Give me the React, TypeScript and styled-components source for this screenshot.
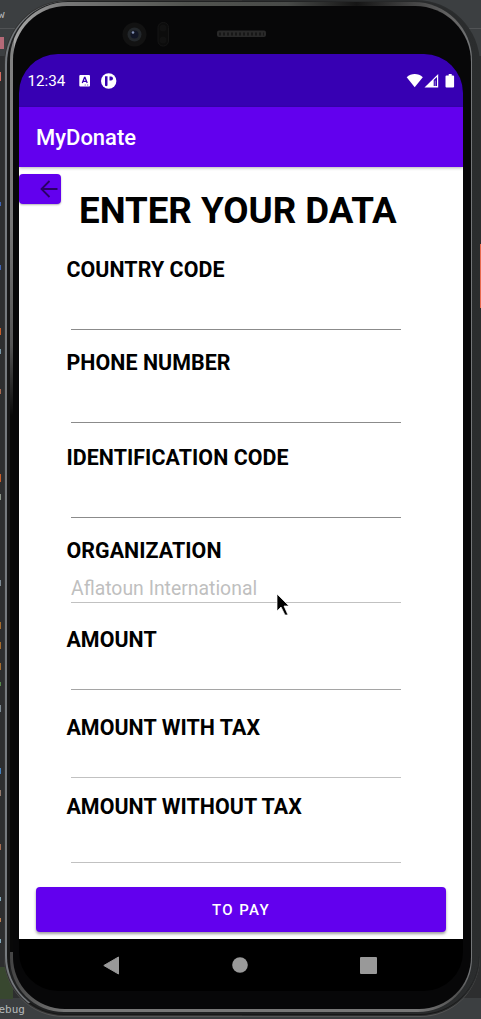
import React from 'react';
import styled, { createGlobalStyle } from 'styled-components';

const Global = createGlobalStyle`
  * { box-sizing: border-box; }
  body { margin: 0; background: #3c3f41; font-family: Roboto, "Liberation Sans", sans-serif; overflow: hidden; }
`;

const Desktop = styled.div`
  position: relative;
  width: 481px;
  height: 1019px;
  padding-left: 4px;
  overflow: hidden;
  background: linear-gradient(#3c3f41 0 28px, #515355 28px 29px, #3c3f41 29px 56px, #2d2e2f 56px 998px, #3c3f41 998px);
`;

const EditorMark = styled.i<{ $top: number; $height: number; $color: string; $side?: 'left' | 'right'; $width?: number }>`
  position: absolute;
  ${(p) => p.$side ?? 'left'}: 0;
  top: ${(p) => p.$top}px;
  width: ${(p) => p.$width ?? 1}px;
  height: ${(p) => p.$height}px;
  background: ${(p) => p.$color};
`;

const EditorText = styled.span<{ $left: number; $top: number }>`
  position: absolute;
  left: ${(p) => p.$left}px;
  top: ${(p) => p.$top}px;
  color: #b4b8ba;
  font: 11px/14px "DejaVu Sans Mono", monospace;
`;

const Shell = styled.div`
  position: relative;
  width: 476px;
  height: 1017px;
  border-radius: 64px 64px 60px 60px;
  padding: 1px;
  background: linear-gradient(90deg, #333333 0 50%, #2b2d2e 50%);
  border-bottom: 1px solid #555;
`;

const OuterEdge = styled.div`
  height: 100%;
  border-radius: 63px 63px 59px 59px;
  border-left: 2px solid #75797d;
  border-bottom: 1px solid #171717;
  padding: 1px 7px 2px 3px;
  background: linear-gradient(90deg, #171717 0 3px, #202122 3px 50%, #2b2d2e);
`;

const InnerEdge = styled.div`
  height: 100%;
  border-radius: 58px 58px 54px 54px;
  padding: 4px 1px 3px 3px;
  background:
    linear-gradient(#858585 0, #777 22%, #555 34%, transparent 41%) left / 4px 100% no-repeat,
    linear-gradient(90deg, transparent 0 94%, #737577 99%) right / 50% 100% no-repeat,
    linear-gradient(90deg, #aaa 0, #777 12%, #525450 38%, #484a48 60%, #151515 75%, #666 96%) top / 100% 70px no-repeat,
    linear-gradient(90deg, #444 0, #777 12%, #777 88%, #444) bottom / 100% 60px no-repeat,
    #080808;
`;

const Face = styled.div`
  height: 100%;
  display: flex;
  flex-direction: column;
  padding: 48px 8px 0 6px;
  border-radius: 54px 56px 52px 52px;
  background: #070708;
`;

const Screen = styled.div`
  width: 444px;
  height: 937px;
  display: flex;
  flex-direction: column;
  overflow: hidden;
  border-radius: 39px;
  background: #000;
`;

const StatusBar = styled.div`
  height: 53px;
  flex: none;
  display: flex;
  align-items: center;
  padding: 0 8px 0 8.5px;
  background: #3700b3;
  color: #fff;
`;

const Clock = styled.span`
  width: 51.5px;
  font-size: 15.2px;
  line-height: 20px;
`;

const StatusLeft = styled.svg` display: block; width: 40px; height: 18px; `;
const StatusRight = styled.svg` display: block; width: 49px; height: 18px; margin-left: auto; `;

const AppBar = styled.header`
  position: relative;
  height: 60px;
  flex: none;
  display: flex;
  align-items: center;
  padding: 1px 17px 0;
  background: #6200ee;
  color: #fff;
  font-size: 22px;
  font-weight: 500;
  box-shadow: 0 1px 3px rgba(0, 0, 0, 0.3);
`;

const Content = styled.main`
  height: 832px;
  flex: none;
  background: #fff;
`;

const TopRow = styled.div`
  display: flex;
  align-items: flex-start;
  height: 90px;
  padding-top: 7px;
`;

const BackButton = styled.button`
  width: 42px;
  height: 30px;
  flex: none;
  padding: 0 0 0 21px;
  border: 0;
  border-radius: 4px;
  background: #6200ee;
  box-shadow: 0 1px 2px rgba(0, 0, 0, 0.3);
  svg { display: block; }
`;

const Title = styled.h1`
  margin: 15px 0 0 18px;
  white-space: nowrap;
  color: #000;
  font-size: 36.7px;
  line-height: 44px;
  font-weight: 700;
`;

const Form = styled.form`
  display: flex;
  flex-direction: column;
  padding-left: 47px;
`;

const Field = styled.div<{ $gap: number }>`
  width: 338px;
  margin-bottom: ${(p) => p.$gap}px;
`;

const Label = styled.div`
  height: 24px;
  padding-left: 0.4px;
  line-height: 25px;
  font-size: 21.4px;
  font-weight: 700;
  letter-spacing: 0.07px;
  white-space: nowrap;
  color: #000;
`;

const Value = styled.div<{ $height: number; $line: string }>`
  height: ${(p) => p.$height}px;
  width: 330px;
  margin-left: 5px;
  padding-top: 15px;
  border-bottom: 1px solid ${(p) => p.$line};
  color: #bfbfbf;
  font-size: 19.4px;
  line-height: 24px;
`;

const PayButton = styled.button`
  display: block;
  width: 410px;
  height: 45px;
  margin-left: 17px;
  padding: 0;
  border: 0;
  border-radius: 4px;
  background: #6200ee;
  color: #fff;
  font: 500 15px/47px Roboto, sans-serif;
  letter-spacing: 1.4px;
  box-shadow: 0 2px 3px rgba(0, 0, 0, 0.38);
`;

const NavBar = styled.nav`
  height: 52px;
  display: flex;
  align-items: center;
  justify-content: space-between;
  padding: 0 86px 0 84px;
  svg { display: block; }
`;

const Hardware = styled.svg`
  position: absolute;
  left: 0;
  top: 0;
  width: 476px;
  height: 54px;
`;

const Pointer = styled.svg`
  position: absolute;
  left: 276px;
  top: 593px;
  width: 14px;
  height: 24px;
`;

const fields = [
  { label: 'COUNTRY CODE', height: 49, gap: 20, line: '#8b8b8b' },
  { label: 'PHONE NUMBER', height: 49, gap: 22, line: '#8b8b8b' },
  { label: 'IDENTIFICATION CODE', height: 49, gap: 20, line: '#8b8b8b' },
  { label: 'ORGANIZATION', height: 41, gap: 24, line: '#c1c1c1', value: 'Aflatoun International' },
  { label: 'AMOUNT', height: 39, gap: 25, line: '#a5a5a5' },
  { label: 'AMOUNT WITH TAX', height: 39, gap: 16, line: '#c1c1c1' },
  { label: 'AMOUNT WITHOUT TAX', height: 45, gap: 24, line: '#c1c1c1' },
];

const marks: [number, number, string][] = [
  [72, 9, '#d66b60'], [202, 4, '#3e63b5'], [265, 5, '#3e63b5'], [328, 7, '#c85c28'],
  [349, 5, '#7798a8'], [389, 5, '#a86850'], [474, 8, '#c85c28'], [494, 6, '#8a9488'],
  [580, 6, '#7c8992'], [622, 7, '#a66b2c'], [642, 7, '#a66b2c'], [663, 7, '#a66b2c'],
  [682, 4, '#538b49'], [705, 7, '#7c8992'], [768, 6, '#4380bd'], [790, 6, '#93786a'],
  [844, 6, '#a66b50'], [897, 4, '#80a7b9'], [918, 4, '#b97c4f'], [939, 4, '#80a7b9'],
];

export default function App() {
  return (
    <Desktop>
      <Global />
      <EditorText $left={-2} $top={8}>w</EditorText>
      <EditorMark $top={37} $height={12} $color="#b66a78" $width={4} />
      {marks.map(([top, height, color]) => (
        <EditorMark key={top} $top={top} $height={height} $color={color} />
      ))}
      <EditorMark $top={967} $height={32} $color="#38472f" $width={13} />
      <EditorText $left={-1.5} $top={1003}>ebug</EditorText>

      <Shell>
        <OuterEdge>
          <InnerEdge>
            <Face>
              <Screen>
                <StatusBar>
                  <Clock>12:34</Clock>
                  <StatusLeft viewBox="0 0 40 18">
                    <rect x="0.300" y="3" width="10.700" height="11.500" rx="1" fill="#fff" />
                    <path d="M3.300 11 5.500 5.500h.500L8.200 11M4.200 9.300h3" fill="none" stroke="#3700b3" strokeWidth="1.300" />
                    <path d="M5.700 13h1M8.200 13h1" stroke="#3700b3" strokeWidth=".8" />
                    <circle cx="29.700" cy="9" r="7.700" fill="#fff" />
                    <path d="M26 4.300v8.700c0 1.600 2.500 1.600 2.500 0V4.300Z" fill="#3700b3" />
                    <path d="M30.500 4.500h1.500a2 2 0 0 1 0 4h-1.500Z" fill="#3700b3" />
                  </StatusLeft>
                  <StatusRight viewBox="0 0 49 18">
                    <path d="M.7 5.200C5 1 12.500 1 16.800 5.200L8.700 15.200Z" fill="#fff" />
                    <path d="M18.500 15.500 32.200 2v13.500Z" fill="#fff" />
                    <path d="M27.700 8 31 5v9h-3.300Z" fill="#3700b3" />
                    <path d="M28.700 8.500h1v5.500h-1Z" fill="#9b80d9" />
                    <path d="M42.700 2h3v1.400h1.400a1 1 0 0 1 1 1v10a1 1 0 0 1-1 1h-6.600a1 1 0 0 1-1-1v-10a1 1 0 0 1 1-1h2.200Z" fill="#fff" />
                  </StatusRight>
                </StatusBar>
                <Content>
                  <AppBar>MyDonate</AppBar>
                  <TopRow>
                    <BackButton type="button" aria-label="Back">
                      <svg width="18" height="18" viewBox="0 0 18 18" fill="none" stroke="#2a0066" strokeWidth="1.800">
                        <path d="M17.500 9H1.500M9.500 1 1.500 9l8 8" />
                      </svg>
                    </BackButton>
                    <Title>ENTER YOUR DATA</Title>
                  </TopRow>
                  <Form>
                    {fields.map((f) => (
                      <Field key={f.label} $gap={f.gap}>
                        <Label>{f.label}</Label>
                        <Value $height={f.height} $line={f.line}>{f.value}</Value>
                      </Field>
                    ))}
                  </Form>
                  <PayButton type="button">TO PAY</PayButton>
                </Content>
                <NavBar>
                  <svg width="17" height="19" viewBox="0 0 17 19"><path d="M15.500 1v17L.800 9.500Z" fill="#999" stroke="#999" strokeLinejoin="round" /></svg>
                  <svg width="16" height="16" viewBox="0 0 16 16"><circle cx="8" cy="8" r="7.800" fill="#999" /></svg>
                  <svg width="17" height="17" viewBox="0 0 17 17"><rect width="17" height="17" rx="1" fill="#999" /></svg>
                </NavBar>
              </Screen>
            </Face>
          </InnerEdge>
        </OuterEdge>
        <Hardware viewBox="4 0 476 54">
          <circle cx="134.500" cy="34.500" r="12" fill="#121212" />
          <circle cx="134.500" cy="34.500" r="7" fill="#23272b" />
          <circle cx="134.500" cy="34.500" r="4" fill="#111525" />
          <circle cx="133" cy="32.500" r="1.300" fill="#8392b5" />
          <rect x="158" y="22.500" width="10.500" height="23.500" rx="5" fill="#0c0c0c" stroke="#151515" />
          <circle cx="163" cy="28" r="3.500" fill="#111" />
          <circle cx="163" cy="40" r="3.500" fill="#111" />
          <rect x="217" y="30.500" width="49" height="6.500" rx="2" fill="#292929" />
          <path d="M219 34h45" stroke="#171717" strokeWidth="3" strokeDasharray="2 2" />
        </Hardware>
      </Shell>

      <EditorMark $side="right" $top={244} $height={64} $color="#e8694e" $width={1} />
      <Pointer viewBox="0 0 14 24">
        <path d="M1 1v17l4-4 4 8h3l-4-9h5Z" fill="#000" stroke="#fff" strokeWidth=".7" />
      </Pointer>
    </Desktop>
  );
}
